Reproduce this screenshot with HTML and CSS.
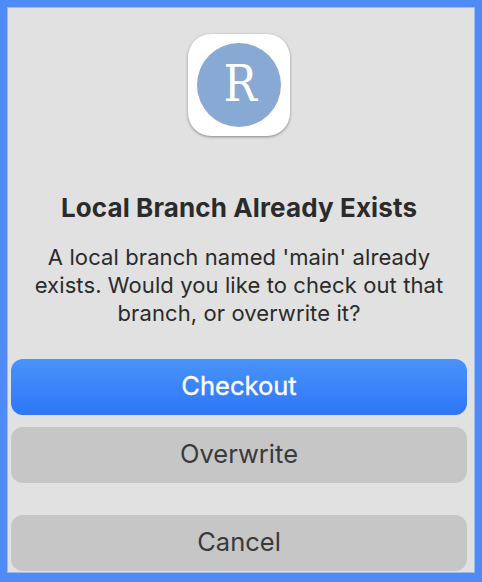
FILE: index.html
```html
<!DOCTYPE html>
<html lang="en">
<head>
<meta charset="utf-8">
<title>Local Branch Already Exists</title>
<link rel="stylesheet" href="styles.css">
</head>
<body>
<div class="frame">
<main class="dialog">
  <div class="icon"><div class="disc"><span class="letter">R</span></div></div>
  <h1 class="title">Local Branch Already Exists</h1>
  <p class="message">A local branch named 'main' already<br>exists. Would you like to check out that<br>branch, or overwrite it?</p>
  <div class="actions">
    <button class="button primary">Checkout</button>
    <button class="button">Overwrite</button>
    <button class="button cancel">Cancel</button>
  </div>
</main>
</div>
</body>
</html>
```
FILE: styles.css
```css
* { box-sizing: border-box; }
body { margin: 0; background: #4e8af8; font-family: Inter, "Liberation Sans", sans-serif; overflow: hidden; }
.frame { width: 482px; height: 582px; padding: 7px 7px 9px; }
.dialog { height: 566px; border: 1px solid #9db9ee; background: #e1e1e1; padding: 26px 7px 0 3px; text-align: center; color: #2b2b2b; }
.icon { width: 102px; height: 102px; margin: 0 auto; padding-top: 9px; border-radius: 23px; background: #fff; box-shadow: 0 1px 3px rgba(0,0,0,.4); }
.disc { width: 84px; height: 84px; margin: 0 auto; border-radius: 50%; background: #88a9d3; color: #fff; }
.letter { display: block; padding-left: 3px; font: 51px/81px "DejaVu Serif", serif; transform: scaleX(.87); }
.title { margin: 55px 0 0; font-size: 26px; line-height: 34px; font-weight: 700; letter-spacing: .12px; white-space: nowrap; }
.message { margin: 18px 0 0; font-size: 22px; line-height: 28px; letter-spacing: .1px; white-space: nowrap; }
.actions { margin-top: 32px; }
.button { display: block; width: 100%; height: 56px; margin: 0 0 12px; padding: 0 0 2px; border: 0; border-radius: 12px; background: #c6c6c6; color: #3a3a3a; font: 25.5px/54px Inter, "Liberation Sans", sans-serif; }
.primary { background: linear-gradient(#4993fa, #2d76f7); color: #fff; -webkit-text-stroke: .35px #fff; }
.cancel { margin-top: 32px; }
```
